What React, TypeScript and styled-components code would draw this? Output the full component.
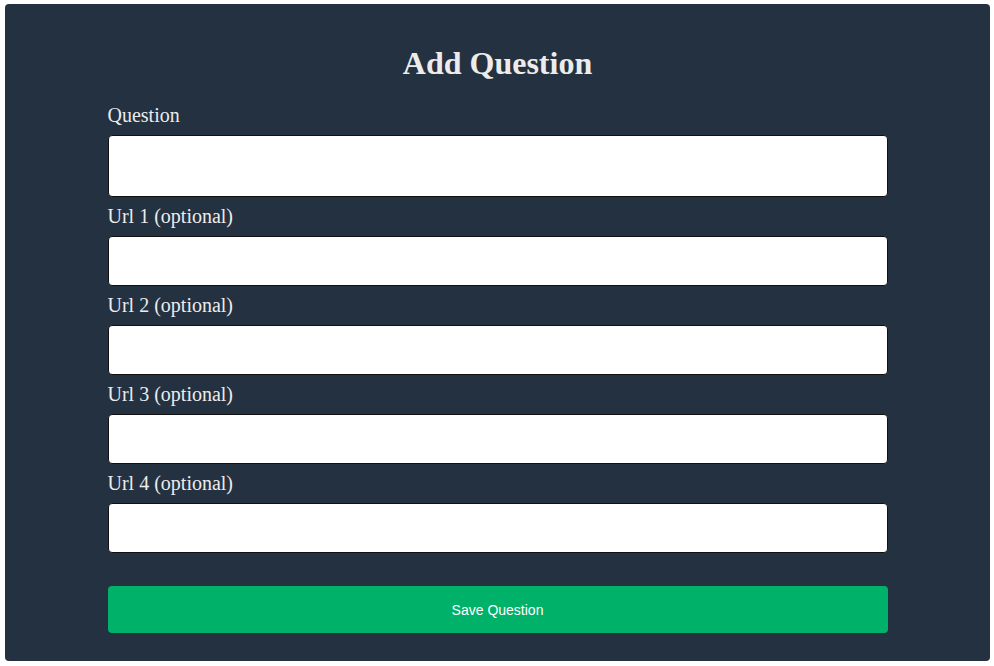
import React from "react";
import styled, { createGlobalStyle } from "styled-components";

const GlobalStyle = createGlobalStyle`
  html, body {
    margin: 0;
    padding: 0;
    background: #ffffff;
  }
  body {
    font-family: "Liberation Serif", "Times New Roman", serif;
  }
  * { box-sizing: border-box; }
`;

const Page = styled.div`
  padding: 4px 4px 5px 5px;
`;

const Card = styled.div`
  background: #233140;
  border-radius: 4px;
  padding: 41px 0 28px;
`;

const Title = styled.h1`
  margin: 0 0 22px;
  font-family: "Liberation Serif", "Times New Roman", serif;
  font-size: 32px;
  line-height: 37px;
  font-weight: 700;
  color: #ececec;
  text-align: center;
`;

const Form = styled.form`
  width: 780px;
  margin: 0 auto;
  display: flex;
  flex-direction: column;
`;

const Field = styled.div`
  display: flex;
  flex-direction: column;
  & + & {
    margin-top: 8px;
  }
`;

const Label = styled.label`
  font-family: "Liberation Serif", "Times New Roman", serif;
  font-size: 20px;
  line-height: 23px;
  color: #ececec;
  margin-bottom: 8px;
`;

const Input = styled.input<{ $tall?: boolean }>`
  width: 100%;
  height: ${(p) => (p.$tall ? "62px" : "50px")};
  background: #ffffff;
  border: 1px solid #111111;
  border-radius: 4px;
  padding: 0 10px;
  font-size: 16px;
  outline: none;
`;

const SaveButton = styled.button`
  margin-top: 33px;
  width: 100%;
  height: 47px;
  background: #00b16a;
  border: none;
  border-radius: 4px;
  color: #ffffff;
  font-family: "Liberation Sans", Arial, sans-serif;
  font-size: 14px;
  cursor: pointer;
`;

const fields = [
  { id: "question", label: "Question", tall: true },
  { id: "url1", label: "Url 1 (optional)" },
  { id: "url2", label: "Url 2 (optional)" },
  { id: "url3", label: "Url 3 (optional)" },
  { id: "url4", label: "Url 4 (optional)" },
];

export default function App() {
  return (
    <Page>
      <GlobalStyle />
      <Card>
        <Title>Add Question</Title>
        <Form onSubmit={(e) => e.preventDefault()}>
          {fields.map((f) => (
            <Field key={f.id}>
              <Label htmlFor={f.id}>{f.label}</Label>
              <Input id={f.id} type="text" $tall={f.tall} />
            </Field>
          ))}
          <SaveButton type="submit">Save Question</SaveButton>
        </Form>
      </Card>
    </Page>
  );
}
